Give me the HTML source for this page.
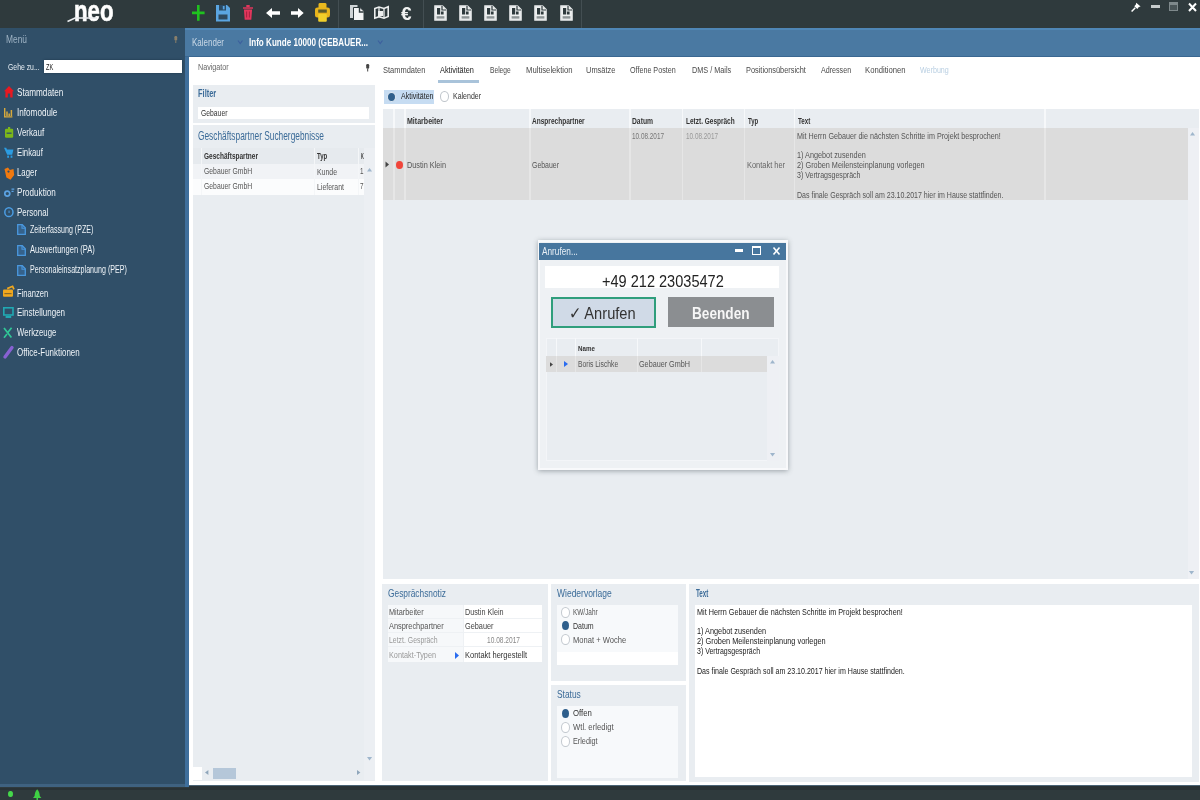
<!DOCTYPE html>
<html lang="de"><head><meta charset="utf-8"><title>neo</title><style>
html,body{margin:0;padding:0}
body{width:1200px;height:800px;overflow:hidden;position:relative;background:#fff;font-family:"Liberation Sans",sans-serif}
#r{position:absolute;left:0;top:0;width:1200px;height:800px;filter:blur(0.75px)}
#r div{position:absolute;box-sizing:border-box}
#r svg{position:absolute;overflow:visible}
.t{position:absolute;white-space:nowrap;transform-origin:0 50%;line-height:1;display:block}
</style></head><body><div id="r">
<div style="left:-8px;top:-8px;width:1216px;height:816px;background:#fff;"></div>
<div style="left:-8px;top:-8px;width:1216px;height:36px;background:#2f3a3d;"></div>
<div style="left:-8px;top:28px;width:193px;height:760px;background:#304f68;"></div>
<div style="left:185px;top:28px;width:1023px;height:29px;background:#4a79a2;"></div>
<div style="left:185px;top:28px;width:1023px;height:2px;background:#4f86b6;"></div>
<div style="left:185px;top:55.5px;width:1023px;height:1.5px;background:#3a6791;"></div>
<div style="left:185px;top:57px;width:4px;height:731px;background:#3f6f9c;"></div>
<div style="left:-8px;top:784px;width:193px;height:4px;background:#3f6280;"></div>
<div style="left:189px;top:784.5px;width:1019px;height:1.5px;background:#4a6375;"></div>
<div style="left:-8px;top:787px;width:197px;height:21px;background:#2f3a3d;"></div>
<div style="left:189px;top:785.5px;width:1019px;height:22.5px;background:#2f3a3d;"></div>
<div style="left:189px;top:786px;width:1019px;height:4px;background:#293235;"></div>
<div style="left:-8px;top:787.5px;width:197px;height:2.5px;background:#293235;"></div>
<span class="t" style="left:73.8px;top:-4.0px;font-size:30px;color:#fff;font-weight:700;transform:scaleX(0.7396);-webkit-text-stroke:0.7px #fff;">neo</span>
<svg style="left:66px;top:15px" width="34" height="8" viewBox="0 0 34 8"><path d="M1.5 6.5 L9 3 L31 3" stroke="#e9ecee" stroke-width="1.6" fill="none"/></svg>
<span class="t" style="left:6px;top:35.0px;font-size:10px;color:#9fb3c4;transform:scaleX(0.84);">Menü</span>
<div style="left:44px;top:60px;width:138px;height:13px;background:#fff;box-shadow:0 0 2px #1d3549"></div>
<span class="t" style="left:8px;top:63.0px;font-size:9px;color:#e6edf3;transform:scaleX(0.7619);">Gehe zu...</span>
<span class="t" style="left:45.5px;top:62.5px;font-size:9px;color:#222;transform:scaleX(0.625);">ZK</span>
<span class="t" style="left:17px;top:87.0px;font-size:11px;color:#eef3f7;transform:scaleX(0.7419);">Stammdaten</span>
<span class="t" style="left:17px;top:107.0px;font-size:11px;color:#eef3f7;transform:scaleX(0.7407);">Infomodule</span>
<span class="t" style="left:17px;top:127.0px;font-size:11px;color:#eef3f7;transform:scaleX(0.7297);">Verkauf</span>
<span class="t" style="left:17px;top:147.0px;font-size:11px;color:#eef3f7;transform:scaleX(0.7027);">Einkauf</span>
<span class="t" style="left:17px;top:167.0px;font-size:11px;color:#eef3f7;transform:scaleX(0.7143);">Lager</span>
<span class="t" style="left:17px;top:187.0px;font-size:11px;color:#eef3f7;transform:scaleX(0.7358);">Produktion</span>
<span class="t" style="left:17px;top:207.0px;font-size:11px;color:#eef3f7;transform:scaleX(0.7209);">Personal</span>
<span class="t" style="left:30px;top:223.5px;font-size:11px;color:#eef3f7;transform:scaleX(0.6429);">Zeiterfassung (PZE)</span>
<span class="t" style="left:30px;top:243.5px;font-size:11px;color:#eef3f7;transform:scaleX(0.6842);">Auswertungen (PA)</span>
<span class="t" style="left:30px;top:263.5px;font-size:11px;color:#eef3f7;transform:scaleX(0.6467);">Personaleinsatzplanung (PEP)</span>
<span class="t" style="left:17px;top:287.5px;font-size:11px;color:#eef3f7;transform:scaleX(0.6889);">Finanzen</span>
<span class="t" style="left:17px;top:307.0px;font-size:11px;color:#eef3f7;transform:scaleX(0.7273);">Einstellungen</span>
<span class="t" style="left:17px;top:327.0px;font-size:11px;color:#eef3f7;transform:scaleX(0.7091);">Werkzeuge</span>
<span class="t" style="left:17px;top:347.0px;font-size:11px;color:#eef3f7;transform:scaleX(0.7241);">Office-Funktionen</span>
<span class="t" style="left:191.7px;top:36.5px;font-size:11px;color:#c9d8e6;transform:scaleX(0.7273);">Kalender</span>
<span class="t" style="left:249px;top:36.5px;font-size:11px;color:#fff;font-weight:700;transform:scaleX(0.7346);">Info Kunde 10000 (GEBAUER...</span>
<span class="t" style="left:197.7px;top:62.5px;font-size:9px;color:#666;transform:scaleX(0.7949);">Navigator</span>
<div style="left:192.5px;top:85px;width:182.5px;height:38px;background:#e9edf1;"></div>
<span class="t" style="left:197.7px;top:89.4px;font-size:10px;color:#3b6b98;font-weight:700;transform:scaleX(0.7458);">Filter</span>
<div style="left:197.7px;top:106.5px;width:171.3px;height:12.5px;background:#fff;"></div>
<span class="t" style="left:200.6px;top:109.0px;font-size:9px;color:#333;transform:scaleX(0.7543);">Gebauer</span>
<div style="left:192.5px;top:125px;width:182.5px;height:655.5px;background:#e9edf1;"></div>
<span class="t" style="left:198px;top:129.6px;font-size:12px;color:#3b6b98;transform:scaleX(0.6945);">Geschäftspartner Suchergebnisse</span>
<div style="left:192.5px;top:148px;width:171.5px;height:15.5px;background:#e6eaee;"></div>
<div style="left:192.5px;top:163.5px;width:171.5px;height:15.5px;background:#f1f3f6;"></div>
<div style="left:192.5px;top:179px;width:171.5px;height:16px;background:#fbfcfd;"></div>
<div style="left:201.2px;top:148px;width:1.0px;height:47px;background:#f4f6f8;"></div>
<div style="left:314.2px;top:148px;width:1.0px;height:47px;background:#f4f6f8;"></div>
<div style="left:357.5px;top:148px;width:1.0px;height:47px;background:#f4f6f8;"></div>
<div style="left:364px;top:148px;width:11px;height:632px;background:#eceff3;"></div>
<span class="t" style="left:204.4px;top:151.5px;font-size:9px;color:#333;font-weight:700;transform:scaleX(0.724);">Geschäftspartner</span>
<span class="t" style="left:317px;top:151.5px;font-size:9px;color:#333;font-weight:700;transform:scaleX(0.6667);">Typ</span>
<span class="t" style="left:360.5px;top:151.5px;font-size:9px;color:#333;font-weight:700;transform:scaleX(0.4286);">K</span>
<span class="t" style="left:204px;top:166.5px;font-size:9px;color:#555;transform:scaleX(0.7578);">Gebauer GmbH</span>
<span class="t" style="left:204px;top:182.0px;font-size:9px;color:#555;transform:scaleX(0.7578);">Gebauer GmbH</span>
<span class="t" style="left:317px;top:167.5px;font-size:9px;color:#555;transform:scaleX(0.7692);">Kunde</span>
<span class="t" style="left:317px;top:182.5px;font-size:9px;color:#555;transform:scaleX(0.7714);">Lieferant</span>
<span class="t" style="left:360px;top:166.5px;font-size:9px;color:#555;transform:scaleX(0.7);">1</span>
<span class="t" style="left:360px;top:182.0px;font-size:9px;color:#555;transform:scaleX(0.7);">7</span>
<div style="left:192.5px;top:767px;width:9.0px;height:13px;background:#fff;"></div>
<div style="left:213px;top:767.5px;width:23px;height:11.5px;background:#b5c7d9;"></div>
<span class="t" style="left:382.5px;top:65.25px;font-size:9.5px;color:#4a4a4a;transform:scaleX(0.787);">Stammdaten</span>
<span class="t" style="left:440px;top:65.25px;font-size:9.5px;color:#222;transform:scaleX(0.7727);">Aktivitäten</span>
<span class="t" style="left:490px;top:65.25px;font-size:9.5px;color:#4a4a4a;transform:scaleX(0.7);">Belege</span>
<span class="t" style="left:526px;top:65.25px;font-size:9.5px;color:#4a4a4a;transform:scaleX(0.8103);">Multiselektion</span>
<span class="t" style="left:586px;top:65.25px;font-size:9.5px;color:#4a4a4a;transform:scaleX(0.7838);">Umsätze</span>
<span class="t" style="left:629.5px;top:65.25px;font-size:9.5px;color:#4a4a4a;transform:scaleX(0.7541);">Offene Posten</span>
<span class="t" style="left:692px;top:65.25px;font-size:9.5px;color:#4a4a4a;transform:scaleX(0.7647);">DMS / Mails</span>
<span class="t" style="left:745.7px;top:65.25px;font-size:9.5px;color:#4a4a4a;transform:scaleX(0.7766);">Positionsübersicht</span>
<span class="t" style="left:821px;top:65.25px;font-size:9.5px;color:#4a4a4a;transform:scaleX(0.75);">Adressen</span>
<span class="t" style="left:864.5px;top:65.25px;font-size:9.5px;color:#4a4a4a;transform:scaleX(0.81);">Konditionen</span>
<span class="t" style="left:919.5px;top:65.25px;font-size:9.5px;color:#b9cfe2;transform:scaleX(0.75);">Werbung</span>
<div style="left:438px;top:79.5px;width:41px;height:3.0px;background:#a9c3da;"></div>
<div style="left:384px;top:90px;width:50px;height:14px;background:#c6dcf2;"></div>
<div style="left:386.5px;top:91.5px;width:9px;height:10px;border-radius:50%;background:#2f5f8c;border:1.5px solid #dfe9f3"></div>
<span class="t" style="left:400.6px;top:92.0px;font-size:9px;color:#1d1d1d;transform:scaleX(0.7833);">Aktivitäten</span>
<div style="left:440px;top:91px;width:9px;height:11px;border-radius:50%;background:#fff;border:1px solid #bfc5cb"></div>
<span class="t" style="left:453px;top:92.0px;font-size:9px;color:#333;transform:scaleX(0.7778);">Kalender</span>
<div style="left:382.5px;top:109px;width:816.0px;height:470px;background:#e9edf1;"></div>
<div style="left:382.5px;top:109px;width:816.0px;height:19px;background:#e9edf1;"></div>
<div style="left:382.5px;top:128px;width:805.0px;height:71.5px;background:#dcdcdc;"></div>
<div style="left:1187.5px;top:128px;width:11.0px;height:451px;background:#eef0f4;"></div>
<div style="left:393.4px;top:109px;width:1.2px;height:19px;background:#f6f8fa;"></div>
<div style="left:393.4px;top:128px;width:1.2px;height:71.5px;background:#e6e6e6;"></div>
<div style="left:404.4px;top:109px;width:1.2px;height:19px;background:#f6f8fa;"></div>
<div style="left:404.4px;top:128px;width:1.2px;height:71.5px;background:#e6e6e6;"></div>
<div style="left:529.4px;top:109px;width:1.2px;height:19px;background:#f6f8fa;"></div>
<div style="left:529.4px;top:128px;width:1.2px;height:71.5px;background:#e6e6e6;"></div>
<div style="left:629.4px;top:109px;width:1.2px;height:19px;background:#f6f8fa;"></div>
<div style="left:629.4px;top:128px;width:1.2px;height:71.5px;background:#e6e6e6;"></div>
<div style="left:681.9px;top:109px;width:1.2px;height:19px;background:#f6f8fa;"></div>
<div style="left:681.9px;top:128px;width:1.2px;height:71.5px;background:#e6e6e6;"></div>
<div style="left:743.9px;top:109px;width:1.2px;height:19px;background:#f6f8fa;"></div>
<div style="left:743.9px;top:128px;width:1.2px;height:71.5px;background:#e6e6e6;"></div>
<div style="left:793.9px;top:109px;width:1.2px;height:19px;background:#f6f8fa;"></div>
<div style="left:793.9px;top:128px;width:1.2px;height:71.5px;background:#e6e6e6;"></div>
<div style="left:1044.4px;top:109px;width:1.2px;height:19px;background:#f6f8fa;"></div>
<div style="left:1044.4px;top:128px;width:1.2px;height:71.5px;background:#e6e6e6;"></div>
<span class="t" style="left:407px;top:116.5px;font-size:9px;color:#333;font-weight:700;transform:scaleX(0.7826);">Mitarbeiter</span>
<span class="t" style="left:532px;top:116.5px;font-size:9px;color:#333;font-weight:700;transform:scaleX(0.726);">Ansprechpartner</span>
<span class="t" style="left:632px;top:116.5px;font-size:9px;color:#333;font-weight:700;transform:scaleX(0.75);">Datum</span>
<span class="t" style="left:686px;top:116.5px;font-size:9px;color:#333;font-weight:700;transform:scaleX(0.7206);">Letzt. Gespräch</span>
<span class="t" style="left:748px;top:116.5px;font-size:9px;color:#333;font-weight:700;transform:scaleX(0.6667);">Typ</span>
<span class="t" style="left:797.5px;top:116.5px;font-size:9px;color:#333;font-weight:700;transform:scaleX(0.6944);">Text</span>
<span class="t" style="left:407px;top:160.5px;font-size:9px;color:#555;transform:scaleX(0.8125);">Dustin Klein</span>
<span class="t" style="left:532px;top:160.5px;font-size:9px;color:#555;transform:scaleX(0.7714);">Gebauer</span>
<span class="t" style="left:632px;top:131.5px;font-size:9px;color:#777;transform:scaleX(0.7111);">10.08.2017</span>
<span class="t" style="left:686px;top:131.5px;font-size:9px;color:#999;transform:scaleX(0.7111);">10.08.2017</span>
<span class="t" style="left:747px;top:160.5px;font-size:9px;color:#666;transform:scaleX(0.8261);">Kontakt her</span>
<span class="t" style="left:797px;top:131.5px;font-size:9px;color:#555;transform:scaleX(0.7969);">Mit Herrn Gebauer die nächsten Schritte im Projekt besprochen!</span>
<span class="t" style="left:797px;top:151.0px;font-size:9px;color:#555;transform:scaleX(0.8082);">1) Angebot zusenden</span>
<span class="t" style="left:797px;top:161.0px;font-size:9px;color:#555;transform:scaleX(0.8101);">2) Groben Meilensteinplanung vorlegen</span>
<span class="t" style="left:797px;top:171.0px;font-size:9px;color:#555;transform:scaleX(0.784);">3) Vertragsgespräch</span>
<span class="t" style="left:797px;top:191.3px;font-size:9px;color:#555;transform:scaleX(0.78);">Das finale Gespräch soll am 23.10.2017 hier im Hause stattfinden.</span>
<svg style="left:385px;top:161px" width="5" height="7" viewBox="0 0 5 7"><path d="M0.5 0.5 L4 3.5 L0.5 6.5Z" fill="#444"/></svg>
<div style="left:396px;top:160.5px;width:7px;height:8.5px;border-radius:50%;background:#f0453a"></div>
<div style="left:382px;top:584px;width:165.5px;height:196.5px;background:#e9edf1;"></div>
<span class="t" style="left:388px;top:587.75px;font-size:10.5px;color:#3b6b98;transform:scaleX(0.7945);">Gesprächsnotiz</span>
<div style="left:387.5px;top:605px;width:75.5px;height:57px;background:#f6f8fa;"></div>
<div style="left:463px;top:605px;width:79px;height:57px;background:#fff;"></div>
<div style="left:387.5px;top:618.2px;width:154.5px;height:1.0px;background:#eef1f4;"></div>
<div style="left:387.5px;top:632.0px;width:154.5px;height:1.0px;background:#eef1f4;"></div>
<div style="left:387.5px;top:646.0px;width:154.5px;height:1.0px;background:#eef1f4;"></div>
<div style="left:462.5px;top:605px;width:1.0px;height:57px;background:#eef1f4;"></div>
<span class="t" style="left:389px;top:607.5px;font-size:9px;color:#555;transform:scaleX(0.814);">Mitarbeiter</span>
<span class="t" style="left:389px;top:621.5px;font-size:9px;color:#555;transform:scaleX(0.8209);">Ansprechpartner</span>
<span class="t" style="left:389px;top:636.0px;font-size:9px;color:#999;transform:scaleX(0.7656);">Letzt. Gespräch</span>
<span class="t" style="left:389px;top:651.0px;font-size:9px;color:#999;transform:scaleX(0.8103);">Kontakt-Typen</span>
<span class="t" style="left:464.5px;top:608.0px;font-size:9px;color:#444;transform:scaleX(0.8021);">Dustin Klein</span>
<span class="t" style="left:464.5px;top:622.0px;font-size:9px;color:#444;transform:scaleX(0.8143);">Gebauer</span>
<span class="t" style="left:487px;top:636.0px;font-size:9px;color:#888;transform:scaleX(0.7333);">10.08.2017</span>
<span class="t" style="left:464.5px;top:651.0px;font-size:9px;color:#333;transform:scaleX(0.8333);">Kontakt hergestellt</span>
<svg style="left:454.5px;top:652px" width="4" height="7" viewBox="0 0 4 7"><path d="M0 0 L4 3.5 L0 7Z" fill="#2a6cf0"/></svg>
<div style="left:551px;top:584px;width:135px;height:97px;background:#e9edf1;"></div>
<span class="t" style="left:557px;top:587.75px;font-size:10.5px;color:#3b6b98;transform:scaleX(0.8088);">Wiedervorlage</span>
<div style="left:556.6px;top:605px;width:121.4px;height:60px;background:#fff;"></div>
<div style="left:556.6px;top:605px;width:121.4px;height:46.7px;background:#f7f9fb;"></div>
<div style="left:561.0px;top:606.5px;width:9px;height:11px;border-radius:50%;background:#fff;border:1px solid #c3c9cf"></div>
<span class="t" style="left:573px;top:608.0px;font-size:9px;color:#555;transform:scaleX(0.7143);">KW/Jahr</span>
<div style="left:562.0px;top:621.0px;width:7px;height:9px;border-radius:50%;background:#2f5f8c"></div>
<span class="t" style="left:573px;top:621.5px;font-size:9px;color:#333;transform:scaleX(0.7778);">Datum</span>
<div style="left:561.0px;top:634.0px;width:9px;height:11px;border-radius:50%;background:#fff;border:1px solid #c3c9cf"></div>
<span class="t" style="left:573px;top:635.5px;font-size:9px;color:#555;transform:scaleX(0.8413);">Monat + Woche</span>
<div style="left:551px;top:685px;width:135px;height:95.5px;background:#e9edf1;"></div>
<span class="t" style="left:557px;top:688.75px;font-size:10.5px;color:#3b6b98;transform:scaleX(0.8);">Status</span>
<div style="left:556.6px;top:706.3px;width:121.4px;height:71.4px;background:#f7f9fb;"></div>
<div style="left:562.0px;top:708.5px;width:7px;height:9px;border-radius:50%;background:#2f5f8c"></div>
<span class="t" style="left:573px;top:709.0px;font-size:9px;color:#333;transform:scaleX(0.8636);">Offen</span>
<div style="left:561.0px;top:721.5px;width:9px;height:11px;border-radius:50%;background:#fff;border:1px solid #c3c9cf"></div>
<span class="t" style="left:573px;top:723.0px;font-size:9px;color:#555;transform:scaleX(0.8542);">Wtl. erledigt</span>
<div style="left:561.0px;top:735.5px;width:9px;height:11px;border-radius:50%;background:#fff;border:1px solid #c3c9cf"></div>
<span class="t" style="left:573px;top:737.0px;font-size:9px;color:#555;transform:scaleX(0.8065);">Erledigt</span>
<div style="left:689px;top:584px;width:509.5px;height:197.5px;background:#e9edf1;"></div>
<span class="t" style="left:695.5px;top:587.75px;font-size:10.5px;color:#3b6b98;font-weight:700;transform:scaleX(0.5952);">Text</span>
<div style="left:695px;top:604.5px;width:496.5px;height:172.5px;background:#fff;"></div>
<span class="t" style="left:697px;top:607.5px;font-size:9px;color:#222;transform:scaleX(0.8047);">Mit Herrn Gebauer die nächsten Schritte im Projekt besprochen!</span>
<span class="t" style="left:697px;top:627.0px;font-size:9px;color:#222;transform:scaleX(0.8118);">1) Angebot zusenden</span>
<span class="t" style="left:697px;top:637.0px;font-size:9px;color:#222;transform:scaleX(0.8165);">2) Groben Meilensteinplanung vorlegen</span>
<span class="t" style="left:697px;top:646.9px;font-size:9px;color:#222;transform:scaleX(0.7778);">3) Vertragsgespräch</span>
<span class="t" style="left:697px;top:667.3px;font-size:9px;color:#222;transform:scaleX(0.7849);">Das finale Gespräch soll am 23.10.2017 hier im Hause stattfinden.</span>
<div style="left:537.5px;top:240px;width:250.5px;height:230px;background:#eef1f4;border:2px solid #f8f9fb;box-shadow:0 1px 5px rgba(60,70,80,.45)"></div>
<div style="left:539px;top:243px;width:247px;height:16.7px;background:#47769e;"></div>
<span class="t" style="left:541.5px;top:247.0px;font-size:10px;color:#e8eff6;transform:scaleX(0.8256);">Anrufen...</span>
<div style="left:735px;top:249px;width:8px;height:2.5px;background:#fff;"></div>
<div style="left:752px;top:246px;width:9px;height:8.5px;border:1.5px solid #fff;border-top-width:2.5px"></div>
<svg style="left:772.5px;top:246.5px" width="7" height="8" viewBox="0 0 7 8"><path d="M0.5 0.5 L6.5 7.5 M6.5 0.5 L0.5 7.5" stroke="#fff" stroke-width="1.6"/></svg>
<div style="left:545.3px;top:266px;width:233.7px;height:22px;background:#fff;"></div>
<span class="t" style="left:602px;top:273.2px;font-size:17px;color:#222;transform:scaleX(0.8556);">+49 212 23035472</span>
<div style="left:551px;top:297px;width:105px;height:30.5px;background:#d0dae7;border:2px solid #2f9e7c"></div>
<span class="t" style="left:569.4px;top:305.0px;font-size:17px;color:#333;transform:scaleX(0.8623);">✓ Anrufen</span>
<div style="left:668px;top:297px;width:105.5px;height:30.4px;background:#8b8e91;"></div>
<span class="t" style="left:691.6px;top:305.3px;font-size:17px;color:#f6f6f6;font-weight:700;transform:scaleX(0.8028);">Beenden</span>
<div style="left:546.2px;top:338px;width:232.4px;height:122.6px;background:#e9edf1;border:1px solid #f3f5f8"></div>
<div style="left:546.2px;top:356px;width:220.5px;height:16px;background:#dcdcdc;"></div>
<div style="left:766.7px;top:356px;width:11.9px;height:104.6px;background:#eef0f4;"></div>
<div style="left:556.0px;top:338px;width:1.0px;height:18px;background:#f6f8fa;"></div>
<div style="left:556.0px;top:356px;width:1.0px;height:16px;background:#e6e6e6;"></div>
<div style="left:574.5px;top:338px;width:1.0px;height:18px;background:#f6f8fa;"></div>
<div style="left:574.5px;top:356px;width:1.0px;height:16px;background:#e6e6e6;"></div>
<div style="left:636.5px;top:338px;width:1.0px;height:18px;background:#f6f8fa;"></div>
<div style="left:636.5px;top:356px;width:1.0px;height:16px;background:#e6e6e6;"></div>
<div style="left:701.0px;top:338px;width:1.0px;height:18px;background:#f6f8fa;"></div>
<div style="left:701.0px;top:356px;width:1.0px;height:16px;background:#e6e6e6;"></div>
<span class="t" style="left:578px;top:345.0px;font-size:8px;color:#333;font-weight:700;transform:scaleX(0.7727);">Name</span>
<span class="t" style="left:577.5px;top:359.75px;font-size:8.5px;color:#555;transform:scaleX(0.7941);">Boris Lischke</span>
<span class="t" style="left:639px;top:359.75px;font-size:8.5px;color:#555;transform:scaleX(0.85);">Gebauer GmbH</span>
<svg style="left:549.5px;top:361.5px" width="3" height="5" viewBox="0 0 4 6"><path d="M0 0 L4 3 L0 6Z" fill="#444"/></svg>
<svg style="left:564px;top:361px" width="4" height="6" viewBox="0 0 4 6"><path d="M0 0 L4 3 L0 6Z" fill="#2a6cf0"/></svg>
<svg style="left:191.7px;top:5px" width="12.6" height="15.7" viewBox="0 0 12.6 15.7"><path d="M6.3 0V15.7M0 7.85H12.6" stroke="#1fc21f" stroke-width="2.6" fill="none"/></svg>
<svg style="left:216px;top:4.7px" width="14" height="16.6" viewBox="0 0 14 16.6"><path d="M0 0H11L14 3V16.6H0Z" fill="#5ba6e2"/><rect x="3" y="0" width="7" height="5.5" fill="#2b4a63"/><rect x="6.8" y="1" width="1.8" height="3.4" fill="#5ba6e2"/><rect x="2.5" y="9.5" width="9" height="5" fill="#2f4a5f"/></svg>
<svg style="left:243px;top:5.3px" width="10" height="14.7" viewBox="0 0 10 14.7"><path d="M0 2.2H10V3.8H0Z M3.3 0H6.7V2H3.3Z M0.9 4.6H9.1L8.3 14.7H1.7Z" fill="#e2365c"/><path d="M3.6 6.5V12.5M6.4 6.5V12.5" stroke="#a8203f" stroke-width="1"/></svg>
<svg style="left:265.7px;top:8px" width="14" height="10" viewBox="0 0 14 10"><path d="M0 5L6 0V3.2H14V6.8H6V10Z" fill="#fff"/></svg>
<svg style="left:291px;top:8px" width="12.7" height="10" viewBox="0 0 12.7 10"><path d="M12.7 5L7 0V3.2H0V6.8H7V10Z" fill="#fff"/></svg>
<svg style="left:315.4px;top:3.3px" width="15" height="18.7" viewBox="0 0 15 18.7"><rect x="3.5" y="0" width="8" height="6" rx="1.5" fill="#e9b91f"/><rect x="0" y="4.5" width="15" height="10" rx="2.5" fill="#e8b41c"/><rect x="3.2" y="6.5" width="8.6" height="3.2" fill="#5b5a2c"/><rect x="3.2" y="11" width="8.6" height="7.7" rx="1" fill="#f2cf2a"/></svg>
<div style="left:338.2px;top:0px;width:1.0px;height:28px;background:#434e52;"></div>
<div style="left:422.9px;top:0px;width:1.0px;height:28px;background:#434e52;"></div>
<div style="left:580.5px;top:0px;width:1.0px;height:28px;background:#434e52;"></div>
<svg style="left:350px;top:4.5px" width="14" height="15.5" viewBox="0 0 14 15.5"><path d="M0 0H7.5V13H0Z" fill="#cfd4d6"/><path d="M3.5 2.5H10L14 6.3V15.5H3.5Z" fill="#f4f5f5" stroke="#2f3a3d" stroke-width="1"/><path d="M9.5 2.8V7H13.6" fill="none" stroke="#2f3a3d" stroke-width="1.4"/></svg>
<svg style="left:374px;top:6px" width="15" height="13" viewBox="0 0 15 13"><path d="M0.8 2.5L5 1L10 2.5L14.2 0.8V10.5L10 12.2L5 10.7L0.8 12.2Z" fill="none" stroke="#eceeee" stroke-width="1.6"/><path d="M5 1V10.7M10 2.5V12.2" stroke="#eceeee" stroke-width="1.3"/><rect x="4" y="5" width="5" height="5" fill="#eceeee"/></svg>
<span class="t" style="left:401px;top:3.5px;font-size:19px;color:#f1f2f2;font-weight:700;transform:scaleX(1.0);">€</span>
<svg style="left:433.5px;top:4.5px" width="13" height="16" viewBox="0 0 13 16"><path d="M0.8 0.8H8.5L12.2 4.5V15.2H0.8Z" fill="#eef0f0" stroke="#dfe2e3" stroke-width="1.2"/><path d="M8 0.8V5H12.2" fill="none" stroke="#2f3a3d" stroke-width="1.2"/><rect x="3" y="3" width="3.2" height="6.5" fill="#2f3a3d"/><rect x="7" y="6.5" width="2.6" height="3" fill="#2f3a3d"/><rect x="2.6" y="11.2" width="7.8" height="2.4" fill="#8d9496"/></svg>
<svg style="left:458.5px;top:4.5px" width="13" height="16" viewBox="0 0 13 16"><path d="M0.8 0.8H8.5L12.2 4.5V15.2H0.8Z" fill="#eef0f0" stroke="#dfe2e3" stroke-width="1.2"/><path d="M8 0.8V5H12.2" fill="none" stroke="#2f3a3d" stroke-width="1.2"/><rect x="3" y="3" width="3.2" height="6.5" fill="#2f3a3d"/><rect x="7" y="6.5" width="2.6" height="3" fill="#2f3a3d"/><rect x="2.6" y="11.2" width="7.8" height="2.4" fill="#8d9496"/></svg>
<svg style="left:484.2px;top:4.5px" width="13" height="16" viewBox="0 0 13 16"><path d="M0.8 0.8H8.5L12.2 4.5V15.2H0.8Z" fill="#eef0f0" stroke="#dfe2e3" stroke-width="1.2"/><path d="M8 0.8V5H12.2" fill="none" stroke="#2f3a3d" stroke-width="1.2"/><rect x="3" y="3" width="3.2" height="6.5" fill="#2f3a3d"/><rect x="7" y="6.5" width="2.6" height="3" fill="#2f3a3d"/><rect x="2.6" y="11.2" width="7.8" height="2.4" fill="#8d9496"/></svg>
<svg style="left:509.0px;top:4.5px" width="13" height="16" viewBox="0 0 13 16"><path d="M0.8 0.8H8.5L12.2 4.5V15.2H0.8Z" fill="#eef0f0" stroke="#dfe2e3" stroke-width="1.2"/><path d="M8 0.8V5H12.2" fill="none" stroke="#2f3a3d" stroke-width="1.2"/><rect x="3" y="3" width="3.2" height="6.5" fill="#2f3a3d"/><rect x="7" y="6.5" width="2.6" height="3" fill="#2f3a3d"/><rect x="2.6" y="11.2" width="7.8" height="2.4" fill="#8d9496"/></svg>
<svg style="left:533.8px;top:4.5px" width="13" height="16" viewBox="0 0 13 16"><path d="M0.8 0.8H8.5L12.2 4.5V15.2H0.8Z" fill="#eef0f0" stroke="#dfe2e3" stroke-width="1.2"/><path d="M8 0.8V5H12.2" fill="none" stroke="#2f3a3d" stroke-width="1.2"/><rect x="3" y="3" width="3.2" height="6.5" fill="#2f3a3d"/><rect x="7" y="6.5" width="2.6" height="3" fill="#2f3a3d"/><rect x="2.6" y="11.2" width="7.8" height="2.4" fill="#8d9496"/></svg>
<svg style="left:559.5px;top:4.5px" width="13" height="16" viewBox="0 0 13 16"><path d="M0.8 0.8H8.5L12.2 4.5V15.2H0.8Z" fill="#eef0f0" stroke="#dfe2e3" stroke-width="1.2"/><path d="M8 0.8V5H12.2" fill="none" stroke="#2f3a3d" stroke-width="1.2"/><rect x="3" y="3" width="3.2" height="6.5" fill="#2f3a3d"/><rect x="7" y="6.5" width="2.6" height="3" fill="#2f3a3d"/><rect x="2.6" y="11.2" width="7.8" height="2.4" fill="#8d9496"/></svg>
<svg style="left:1131px;top:2px" width="10.5" height="10" viewBox="0 0 10.5 10"><path d="M5.2 0.8L9.6 4.6L7.8 5.1L6.3 7L3.3 4.3L4.9 2.6Z" fill="#fff"/><path d="M4.3 5.8L0.6 9.5" stroke="#fff" stroke-width="1.5"/></svg>
<div style="left:1151px;top:5.3px;width:9px;height:2.5px;background:#c7cccd;"></div>
<div style="left:1169px;top:1.5px;width:9px;height:9.5px;border:1.5px solid #7f898c;border-top-width:3px;background:#4a5558"></div>
<svg style="left:1188px;top:3px" width="9" height="8.5" viewBox="0 0 9 8.5"><path d="M1 0.5L8 8M8 0.5L1 8" stroke="#fff" stroke-width="2"/></svg>
<svg style="left:3.8px;top:86px" width="10" height="11.5" viewBox="0 0 10 11.5"><path d="M5 0L10 5.2H8.6V11.5H6.2V7.5H3.8V11.5H1.4V5.2H0Z" fill="#ea1820"/></svg>
<svg style="left:4.4px;top:108px" width="8.4" height="9.6" viewBox="0 0 8.4 9.6"><path d="M0.7 0V8.9H8.4" stroke="#d8aa3c" stroke-width="1.4" fill="none"/><path d="M3 8V3.5M5.2 8V5.5M7.4 8V2" stroke="#d8aa3c" stroke-width="1.5"/></svg>
<svg style="left:4.9px;top:127px" width="8.2" height="10.7" viewBox="0 0 8.2 10.7"><rect x="0" y="1.8" width="8.2" height="8.9" rx="1.2" fill="#7cb61a"/><rect x="3" y="0" width="2.2" height="2.4" fill="#7cb61a"/><path d="M1.6 6.2H6.6" stroke="#304f68" stroke-width="1.3"/></svg>
<svg style="left:4.4px;top:147px" width="9.4" height="11" viewBox="0 0 9.4 11"><path d="M0 0.8H2.2L3 2.5H9.4L8.2 7.8H3.2Z" fill="#2b9ce2"/><rect x="3.2" y="8.6" width="1.8" height="2.2" fill="#2b9ce2"/><rect x="6.6" y="8.6" width="1.8" height="2.2" fill="#2b9ce2"/></svg>
<svg style="left:3.8px;top:167px" width="10.4" height="13" viewBox="0 0 10.4 13"><path d="M0.5 2L4 0.5L5.8 3L9.5 2L10.2 8L6.5 12.8L2.4 10.5Z" fill="#f0790f"/><circle cx="4.5" cy="4.6" r="1.1" fill="#304f68"/></svg>
<svg style="left:3.5px;top:188px" width="10.6" height="9.5" viewBox="0 0 10.6 9.5"><circle cx="3.3" cy="5.6" r="2.5" fill="none" stroke="#5ba2e2" stroke-width="1.7"/><path d="M7.5 1.2H10.3M7.5 3.4H9.6" stroke="#5ba2e2" stroke-width="1.3"/></svg>
<svg style="left:3.5px;top:207.4px" width="9.8" height="10.8" viewBox="0 0 9.8 10.8"><ellipse cx="4.9" cy="5.2" rx="4.1" ry="4.4" fill="none" stroke="#4b9de3" stroke-width="1.5"/><rect x="4.3" y="3.6" width="1.6" height="2.4" fill="#4b9de3" opacity=".6"/></svg>
<svg style="left:17px;top:224.4px" width="9" height="11" viewBox="0 0 9 11"><path d="M0.7 0.7H5.3L8.3 3.8V10.3H0.7Z" fill="#35628b" stroke="#4a98de" stroke-width="1.3"/><path d="M5 1V4.2H8" fill="none" stroke="#4a98de" stroke-width="1.1"/></svg>
<svg style="left:17px;top:244.6px" width="9" height="11" viewBox="0 0 9 11"><path d="M0.7 0.7H5.3L8.3 3.8V10.3H0.7Z" fill="#35628b" stroke="#4a98de" stroke-width="1.3"/><path d="M5 1V4.2H8" fill="none" stroke="#4a98de" stroke-width="1.1"/></svg>
<svg style="left:17px;top:264.8px" width="9" height="11" viewBox="0 0 9 11"><path d="M0.7 0.7H5.3L8.3 3.8V10.3H0.7Z" fill="#35628b" stroke="#4a98de" stroke-width="1.3"/><path d="M5 1V4.2H8" fill="none" stroke="#4a98de" stroke-width="1.1"/></svg>
<svg style="left:2.8px;top:286px" width="11.2" height="10.8" viewBox="0 0 11.2 10.8"><rect x="0" y="3.4" width="10" height="7.4" rx="1" fill="#f1a81e"/><path d="M4.2 2.6L9.6 0.3L11 3.4" stroke="#f1a81e" stroke-width="1.7" fill="none"/><path d="M1.4 7.6H8.6" stroke="#8a6a28" stroke-width="1.2"/></svg>
<svg style="left:2.8px;top:307px" width="10.8" height="11.2" viewBox="0 0 10.8 11.2"><rect x="0.8" y="0.8" width="9.2" height="7.2" fill="none" stroke="#21a9b3" stroke-width="1.6"/><rect x="2.6" y="9" width="5.6" height="2" fill="#21a9b3"/></svg>
<svg style="left:3.4px;top:326.6px" width="9.4" height="11.4" viewBox="0 0 9.4 11.4"><path d="M1 1L8.4 10.6M8.6 0.8L4.8 5.6M4 7L1 10.8" stroke="#31c897" stroke-width="1.7" fill="none"/></svg>
<svg style="left:2.8px;top:346px" width="11.2" height="12.5" viewBox="0 0 11.2 12.5"><path d="M9 1.5L2 11" stroke="#8861d2" stroke-width="3.4" stroke-linecap="round"/></svg>
<div style="left:8.3px;top:791.3px;width:4.5px;height:5.8px;border-radius:50%;background:#45d84a"></div>
<svg style="left:33.3px;top:788.8px" width="7.6" height="10.6" viewBox="0 0 7.6 10.6"><path d="M4.2 0.3C6 2 6.6 4.5 6.8 7L8.4 8.9H0L1.6 7C1.8 4.5 2.4 2 4.2 0.3Z" fill="#3fd044"/><rect x="3.5" y="8.9" width="1.5" height="3.1" fill="#3fd044"/></svg>
<svg style="left:174px;top:36px" width="3.6" height="7" viewBox="0 0 3.6 7"><rect x="0.4" y="0" width="2.8" height="4.4" rx="1.2" fill="#8a7f6a"/><rect x="1.3" y="4.4" width="1" height="2.6" fill="#8a7f6a"/></svg>
<svg style="left:365.6px;top:63.5px" width="3.4" height="7.5" viewBox="0 0 3.4 7.5"><rect x="0.2" y="0" width="3" height="4.8" rx="1.3" fill="#444"/><rect x="1.2" y="4.8" width="1" height="2.7" fill="#444"/></svg>
<svg style="left:378px;top:40px" width="4.5" height="4" viewBox="0 0 4.5 4"><path d="M0 0.5L2.2 3.5L4.5 0.5" fill="none" stroke="#3c5f9e" stroke-width="1.1"/></svg>
<svg style="left:238px;top:40px" width="4.5" height="4" viewBox="0 0 4.5 4"><path d="M0 0.5L2.2 3.5L4.5 0.5" fill="none" stroke="#3c5f9e" stroke-width="1.1"/></svg>
<svg style="left:1189.95px;top:132.3px" width="5.1" height="3.4" viewBox="0 0 6 4"><path d="M0 4L3 0L6 4Z" fill="#9fb6cc"/></svg>
<svg style="left:1189.45px;top:570.8px" width="5.1" height="3.4" viewBox="0 0 6 4"><path d="M0 0L3 4L6 0Z" fill="#9fb6cc"/></svg>
<svg style="left:366.95px;top:168.3px" width="5.1" height="3.4" viewBox="0 0 6 4"><path d="M0 4L3 0L6 4Z" fill="#9fb6cc"/></svg>
<svg style="left:366.95px;top:757.3px" width="5.1" height="3.4" viewBox="0 0 6 4"><path d="M0 0L3 4L6 0Z" fill="#9fb6cc"/></svg>
<svg style="left:205.3px;top:770.45px" width="3.4" height="5.1" viewBox="0 0 4 6"><path d="M4 0L0 3L4 6Z" fill="#8fa6bb"/></svg>
<svg style="left:356.8px;top:770.45px" width="3.4" height="5.1" viewBox="0 0 4 6"><path d="M0 0L4 3L0 6Z" fill="#8fa6bb"/></svg>
<svg style="left:770.45px;top:359.8px" width="5.1" height="3.4" viewBox="0 0 6 4"><path d="M0 4L3 0L6 4Z" fill="#9fb6cc"/></svg>
<svg style="left:770.45px;top:453.3px" width="5.1" height="3.4" viewBox="0 0 6 4"><path d="M0 0L3 4L6 0Z" fill="#9fb6cc"/></svg>
</div></body></html>
